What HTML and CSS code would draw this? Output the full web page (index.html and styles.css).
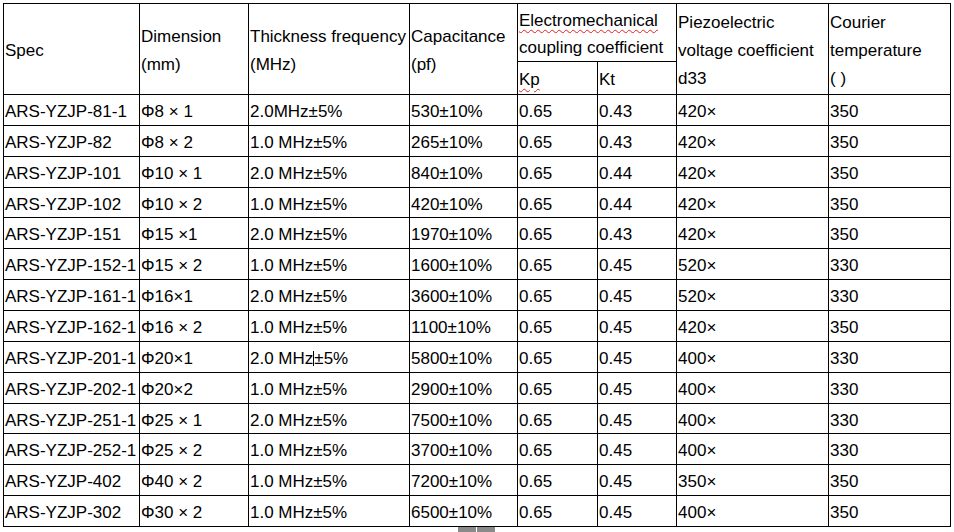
FILE: index.html
```html
<!DOCTYPE html>
<html>
<head>
<meta charset="utf-8">
<link rel="stylesheet" href="styles.css">
</head>
<body>
<div class="page">
<table class="spec">
  <colgroup>
    <col class="c1"><col class="c2"><col class="c3"><col class="c4"><col class="c5"><col class="c6"><col class="c7"><col class="c8">
  </colgroup>
  <thead>
    <tr class="h1">
      <th rowspan="2">Spec</th>
      <th rowspan="2">Dimension<br>(mm)</th>
      <th rowspan="2">Thickness frequency<br>(MHz)</th>
      <th rowspan="2">Capacitance<br>(pf)</th>
      <th colspan="2" class="tight"><span class="spell">Electromechanical</span><br>coupling coefficient</th>
      <th rowspan="2">Piezoelectric<br>voltage coefficient<br>d33</th>
      <th rowspan="2">Courier<br>temperature<br>( )</th>
    </tr>
    <tr class="h2">
      <th><span class="spell">Kp</span></th>
      <th>Kt</th>
    </tr>
  </thead>
  <tbody>
    <tr><td>ARS-YZJP-81-1</td><td>Φ8 × 1</td><td>2.0MHz±5%</td><td>530±10%</td><td>0.65</td><td>0.43</td><td>420×</td><td>350</td></tr>
    <tr><td>ARS-YZJP-82</td><td>Φ8 × 2</td><td>1.0 MHz±5%</td><td>265±10%</td><td>0.65</td><td>0.43</td><td>420×</td><td>350</td></tr>
    <tr><td>ARS-YZJP-101</td><td>Φ10 × 1</td><td>2.0 MHz±5%</td><td>840±10%</td><td>0.65</td><td>0.44</td><td>420×</td><td>350</td></tr>
    <tr><td>ARS-YZJP-102</td><td>Φ10 × 2</td><td>1.0 MHz±5%</td><td>420±10%</td><td>0.65</td><td>0.44</td><td>420×</td><td>350</td></tr>
    <tr><td>ARS-YZJP-151</td><td>Φ15 ×1</td><td>2.0 MHz±5%</td><td>1970±10%</td><td>0.65</td><td>0.43</td><td>420×</td><td>350</td></tr>
    <tr><td>ARS-YZJP-152-1</td><td>Φ15 × 2</td><td>1.0 MHz±5%</td><td>1600±10%</td><td>0.65</td><td>0.45</td><td>520×</td><td>330</td></tr>
    <tr><td>ARS-YZJP-161-1</td><td>Φ16×1</td><td>2.0 MHz±5%</td><td>3600±10%</td><td>0.65</td><td>0.45</td><td>520×</td><td>330</td></tr>
    <tr><td>ARS-YZJP-162-1</td><td>Φ16 × 2</td><td>1.0 MHz±5%</td><td>1100±10%</td><td>0.65</td><td>0.45</td><td>420×</td><td>350</td></tr>
    <tr><td>ARS-YZJP-201-1</td><td>Φ20×1</td><td>2.0 MHz<span class="caret"></span>±5%</td><td>5800±10%</td><td>0.65</td><td>0.45</td><td>400×</td><td>330</td></tr>
    <tr><td>ARS-YZJP-202-1</td><td>Φ20×2</td><td>1.0 MHz±5%</td><td>2900±10%</td><td>0.65</td><td>0.45</td><td>400×</td><td>330</td></tr>
    <tr><td>ARS-YZJP-251-1</td><td>Φ25 × 1</td><td>2.0 MHz±5%</td><td>7500±10%</td><td>0.65</td><td>0.45</td><td>400×</td><td>330</td></tr>
    <tr><td>ARS-YZJP-252-1</td><td>Φ25 × 2</td><td>1.0 MHz±5%</td><td>3700±10%</td><td>0.65</td><td>0.45</td><td>400×</td><td>330</td></tr>
    <tr><td>ARS-YZJP-402</td><td>Φ40 × 2</td><td>1.0 MHz±5%</td><td>7200±10%</td><td>0.65</td><td>0.45</td><td>350×</td><td>350</td></tr>
    <tr><td>ARS-YZJP-302</td><td>Φ30 × 2</td><td>1.0 MHz±5%</td><td>6500±10%</td><td>0.65</td><td>0.45</td><td>400×</td><td>350</td></tr>
  </tbody>
</table>
<div class="thumb"><span class="tick"></span></div>
</div>
</body>
</html>
```

FILE: styles.css
```css
html, body {
  margin: 0;
  padding: 0;
  background: #fff;
}
.page {
  position: relative;
  width: 954px;
  height: 532px;
  overflow: hidden;
  padding: 3px 0 0 3px;
  box-sizing: border-box;
  font-family: "Liberation Sans", Arial, sans-serif;
  font-size: 17px;
  color: #000;
}
.spec {
  border-collapse: collapse;
  table-layout: fixed;
  width: 948px;
}
.c1 { width: 136px; }
.c2 { width: 109px; }
.c3 { width: 161px; }
.c4 { width: 108px; }
.c5 { width: 80px; }
.c6 { width: 79px; }
.c7 { width: 152px; }
.c8 { width: 122px; }
.spec th, .spec td {
  border: 1px solid #000;
  padding: 4px 0 0 1px;
  text-align: left;
  font-weight: normal;
  vertical-align: middle;
  white-space: nowrap;
  overflow: hidden;
}
.spec th {
  line-height: 28px;
}
.spec th.tight {
  line-height: 27px;
  padding-top: 2px;
}
.h1 { height: 58px; }
.h2 { height: 33px; }
.spec tbody tr { height: 30.86px; }
.spec td { line-height: 20px; }
.spell {
  text-decoration: underline wavy #e02020;
  text-decoration-thickness: 1px;
  text-underline-offset: 3px;
}
.caret {
  display: inline-block;
  width: 1px;
  height: 15px;
  background: #000;
  vertical-align: -2px;
}
.thumb {
  position: absolute;
  left: 458px;
  top: 527px;
  width: 37px;
  height: 5px;
  background: #8a8a8a;
}
.tick {
  position: absolute;
  left: 18px;
  top: 0;
  width: 1px;
  height: 5px;
  background: #fff;
}
```
